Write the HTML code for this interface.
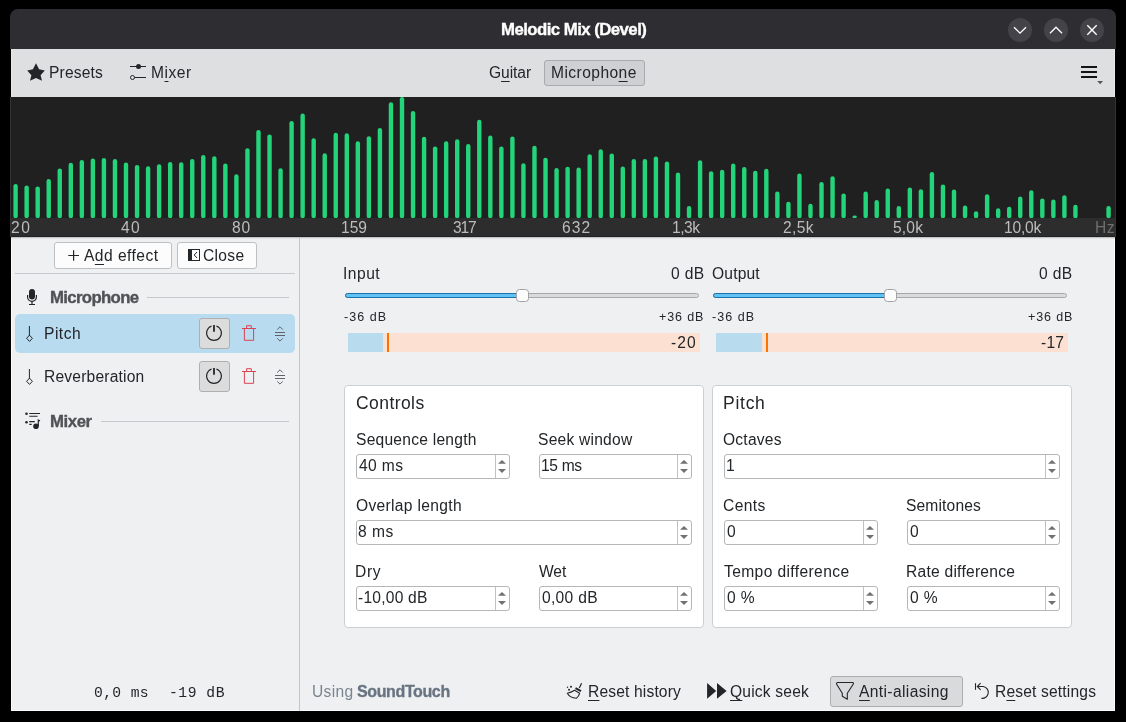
<!DOCTYPE html><html><head><meta charset="utf-8"><style>
html,body{margin:0;padding:0;width:1126px;height:722px;overflow:hidden;background:#000;font-family:"Liberation Sans",sans-serif;}
.t{position:absolute;white-space:pre;line-height:1;will-change:transform;}
.t u{text-decoration:underline;text-underline-offset:3px;text-decoration-thickness:1px;}
svg{overflow:visible}
</style></head><body>
<div style="position:absolute;left:11px;top:40px;width:1104px;height:671px;box-sizing:border-box;background:#eff0f1;border:1px solid #fbfbfc;border-top:none"></div>
<div style="position:absolute;left:10px;top:9px;width:1106px;height:40px;box-sizing:border-box;background:#2e2d32;border-radius:8px 8px 0 0"></div>
<div style="position:absolute;left:11px;top:49px;width:1104px;height:48px;box-sizing:border-box;background:#dedfe1;border-left:1px solid #e6e7e9;border-right:1px solid #e6e7e9"></div>
<div style="position:absolute;left:10px;top:97px;width:1106px;height:140px;box-sizing:border-box;background:#333336"></div>
<div style="position:absolute;left:11px;top:97px;width:1104px;height:121px;box-sizing:border-box;background:#202020"></div>
<div style="position:absolute;left:11px;top:218px;width:1104px;height:18px;box-sizing:border-box;background:#2d2d2d"></div>
<div style="position:absolute;left:11px;top:236px;width:1104px;height:1px;box-sizing:border-box;background:#222223"></div>
<div style="position:absolute;left:11px;top:237px;width:1104px;height:1px;box-sizing:border-box;background:#c4c5c7"></div>
<div style="position:absolute;left:11px;top:238px;width:1104px;height:1px;box-sizing:border-box;background:#e4e5e7"></div>
<svg width="1126" height="722" style="position:absolute;left:0;top:0"><defs><clipPath id="sc"><rect x="10" y="97" width="1105" height="121"/></clipPath></defs><g fill="#24d47b" clip-path="url(#sc)"><rect x="13.40" y="184.00" width="4.4" height="34.20" rx="2.2"/><rect x="24.44" y="185.40" width="4.4" height="32.80" rx="2.2"/><rect x="35.48" y="186.40" width="4.4" height="31.80" rx="2.2"/><rect x="46.52" y="179.00" width="4.4" height="39.20" rx="2.2"/><rect x="57.56" y="168.50" width="4.4" height="49.70" rx="2.2"/><rect x="68.60" y="162.70" width="4.4" height="55.50" rx="2.2"/><rect x="79.64" y="159.90" width="4.4" height="58.30" rx="2.2"/><rect x="90.68" y="158.50" width="4.4" height="59.70" rx="2.2"/><rect x="101.72" y="157.90" width="4.4" height="60.30" rx="2.2"/><rect x="112.76" y="159.00" width="4.4" height="59.20" rx="2.2"/><rect x="123.80" y="162.50" width="4.4" height="55.70" rx="2.2"/><rect x="134.84" y="164.90" width="4.4" height="53.30" rx="2.2"/><rect x="145.88" y="166.20" width="4.4" height="52.00" rx="2.2"/><rect x="156.92" y="164.30" width="4.4" height="53.90" rx="2.2"/><rect x="167.96" y="162.10" width="4.4" height="56.10" rx="2.2"/><rect x="179.00" y="162.30" width="4.4" height="55.90" rx="2.2"/><rect x="190.04" y="158.90" width="4.4" height="59.30" rx="2.2"/><rect x="201.08" y="155.00" width="4.4" height="63.20" rx="2.2"/><rect x="212.12" y="156.20" width="4.4" height="62.00" rx="2.2"/><rect x="223.16" y="163.50" width="4.4" height="54.70" rx="2.2"/><rect x="234.20" y="174.30" width="4.4" height="43.90" rx="2.2"/><rect x="245.24" y="148.20" width="4.4" height="70.00" rx="2.2"/><rect x="256.28" y="129.90" width="4.4" height="88.30" rx="2.2"/><rect x="267.32" y="134.40" width="4.4" height="83.80" rx="2.2"/><rect x="278.36" y="168.30" width="4.4" height="49.90" rx="2.2"/><rect x="289.40" y="121.10" width="4.4" height="97.10" rx="2.2"/><rect x="300.44" y="113.50" width="4.4" height="104.70" rx="2.2"/><rect x="311.48" y="138.20" width="4.4" height="80.00" rx="2.2"/><rect x="322.52" y="153.20" width="4.4" height="65.00" rx="2.2"/><rect x="333.56" y="132.75" width="4.4" height="85.45" rx="2.2"/><rect x="344.60" y="133.20" width="4.4" height="85.00" rx="2.2"/><rect x="355.64" y="141.20" width="4.4" height="77.00" rx="2.2"/><rect x="366.68" y="136.20" width="4.4" height="82.00" rx="2.2"/><rect x="377.72" y="127.90" width="4.4" height="90.30" rx="2.2"/><rect x="388.76" y="102.20" width="4.4" height="116.00" rx="2.2"/><rect x="399.80" y="97.00" width="4.4" height="121.20" rx="2.2"/><rect x="410.84" y="110.90" width="4.4" height="107.30" rx="2.2"/><rect x="421.88" y="136.80" width="4.4" height="81.40" rx="2.2"/><rect x="432.92" y="146.40" width="4.4" height="71.80" rx="2.2"/><rect x="443.96" y="141.20" width="4.4" height="77.00" rx="2.2"/><rect x="455.00" y="139.20" width="4.4" height="79.00" rx="2.2"/><rect x="466.04" y="144.00" width="4.4" height="74.20" rx="2.2"/><rect x="477.08" y="119.70" width="4.4" height="98.50" rx="2.2"/><rect x="488.12" y="135.60" width="4.4" height="82.60" rx="2.2"/><rect x="499.16" y="146.40" width="4.4" height="71.80" rx="2.2"/><rect x="510.20" y="136.60" width="4.4" height="81.60" rx="2.2"/><rect x="521.24" y="163.30" width="4.4" height="54.90" rx="2.2"/><rect x="532.28" y="145.80" width="4.4" height="72.40" rx="2.2"/><rect x="543.32" y="157.65" width="4.4" height="60.55" rx="2.2"/><rect x="554.36" y="168.10" width="4.4" height="50.10" rx="2.2"/><rect x="565.40" y="166.70" width="4.4" height="51.50" rx="2.2"/><rect x="576.44" y="167.50" width="4.4" height="50.70" rx="2.2"/><rect x="587.48" y="154.20" width="4.4" height="64.00" rx="2.2"/><rect x="598.52" y="149.20" width="4.4" height="69.00" rx="2.2"/><rect x="609.56" y="153.40" width="4.4" height="64.80" rx="2.2"/><rect x="620.60" y="166.50" width="4.4" height="51.70" rx="2.2"/><rect x="631.64" y="159.10" width="4.4" height="59.10" rx="2.2"/><rect x="642.68" y="159.10" width="4.4" height="59.10" rx="2.2"/><rect x="653.72" y="156.40" width="4.4" height="61.80" rx="2.2"/><rect x="664.76" y="161.50" width="4.4" height="56.70" rx="2.2"/><rect x="675.80" y="172.50" width="4.4" height="45.70" rx="2.2"/><rect x="686.84" y="206.00" width="4.4" height="12.20" rx="2.2"/><rect x="697.88" y="160.30" width="4.4" height="57.90" rx="2.2"/><rect x="708.92" y="171.30" width="4.4" height="46.90" rx="2.2"/><rect x="719.96" y="169.70" width="4.4" height="48.50" rx="2.2"/><rect x="731.00" y="163.50" width="4.4" height="54.70" rx="2.2"/><rect x="742.04" y="167.10" width="4.4" height="51.10" rx="2.2"/><rect x="753.08" y="170.70" width="4.4" height="47.50" rx="2.2"/><rect x="764.12" y="168.70" width="4.4" height="49.50" rx="2.2"/><rect x="775.16" y="191.60" width="4.4" height="26.60" rx="2.2"/><rect x="786.20" y="201.80" width="4.4" height="16.40" rx="2.2"/><rect x="797.24" y="173.50" width="4.4" height="44.70" rx="2.2"/><rect x="808.28" y="203.80" width="4.4" height="14.40" rx="2.2"/><rect x="819.32" y="182.10" width="4.4" height="36.10" rx="2.2"/><rect x="830.36" y="176.30" width="4.4" height="41.90" rx="2.2"/><rect x="841.40" y="193.40" width="4.4" height="24.80" rx="2.2"/><rect x="852.44" y="215.50" width="4.4" height="2.70" rx="2.2"/><rect x="863.48" y="191.60" width="4.4" height="26.60" rx="2.2"/><rect x="874.52" y="200.00" width="4.4" height="18.20" rx="2.2"/><rect x="885.56" y="188.60" width="4.4" height="29.60" rx="2.2"/><rect x="896.60" y="206.00" width="4.4" height="12.20" rx="2.2"/><rect x="907.64" y="187.40" width="4.4" height="30.80" rx="2.2"/><rect x="918.68" y="189.20" width="4.4" height="29.00" rx="2.2"/><rect x="929.72" y="172.10" width="4.4" height="46.10" rx="2.2"/><rect x="940.76" y="184.40" width="4.4" height="33.80" rx="2.2"/><rect x="951.80" y="189.40" width="4.4" height="28.80" rx="2.2"/><rect x="962.84" y="205.60" width="4.4" height="12.60" rx="2.2"/><rect x="973.88" y="211.30" width="4.4" height="6.90" rx="2.2"/><rect x="984.92" y="194.20" width="4.4" height="24.00" rx="2.2"/><rect x="995.96" y="208.30" width="4.4" height="9.90" rx="2.2"/><rect x="1007.00" y="206.80" width="4.4" height="11.40" rx="2.2"/><rect x="1018.04" y="196.60" width="4.4" height="21.60" rx="2.2"/><rect x="1029.08" y="190.20" width="4.4" height="28.00" rx="2.2"/><rect x="1040.12" y="198.40" width="4.4" height="19.80" rx="2.2"/><rect x="1051.16" y="199.60" width="4.4" height="18.60" rx="2.2"/><rect x="1062.20" y="195.20" width="4.4" height="23.00" rx="2.2"/><rect x="1073.24" y="204.80" width="4.4" height="13.40" rx="2.2"/><rect x="1106.36" y="206.00" width="4.4" height="12.20" rx="2.2"/></g></svg>
<svg width="1126" height="60" style="position:absolute;left:0;top:0"><circle cx="1020" cy="30" r="12" fill="#444349"/><circle cx="1056" cy="30" r="12" fill="#444349"/><circle cx="1092" cy="30" r="12" fill="#444349"/><path d="M1014,27.2 L1020,33.2 L1026,27.2" fill="none" stroke="#fff" stroke-width="1.3"/><path d="M1050,33.2 L1056,27.2 L1062,33.2" fill="none" stroke="#fff" stroke-width="1.3"/><path d="M1087.3,25.3 L1096.7,34.7 M1096.7,25.3 L1087.3,34.7" fill="none" stroke="#fff" stroke-width="1.4"/></svg>
<svg width="1126" height="100" style="position:absolute;left:0;top:0"><path d="M36,63.3 L39.1,69.2 L44.8,70.4 L40.6,75.2 L42,80.8 L36,78.1 L30,80.8 L31.4,75.2 L27.2,70.4 L32.9,69.2 Z" fill="#232629"/><path d="M130,66.5 H146 M134.5,77.5 H146" stroke="#232629" stroke-width="1"/><circle cx="138.5" cy="66.5" r="2.5" fill="#232629"/><circle cx="132.5" cy="77.5" r="2" fill="none" stroke="#232629" stroke-width="1"/><path d="M1081,67 H1097 M1081,72 H1097 M1081,77 H1097" stroke="#121416" stroke-width="2"/><path d="M1097.2,81.1 L1103.1,81.1 L1100.15,84.2 Z" fill="#55585b"/></svg>
<div style="position:absolute;left:544px;top:60px;width:101px;height:26px;box-sizing:border-box;background:#cfd0d2;border:1px solid #a9aaad;border-radius:3px"></div>
<div style="position:absolute;left:299px;top:237px;width:1px;height:474px;box-sizing:border-box;background:#c3c6c9"></div>
<div style="position:absolute;left:54px;top:242px;width:118px;height:27px;box-sizing:border-box;background:#fcfcfc;border:1px solid #bfc0c2;border-radius:3px"></div>
<div style="position:absolute;left:177px;top:242px;width:80px;height:27px;box-sizing:border-box;background:#fcfcfc;border:1px solid #bfc0c2;border-radius:3px"></div>
<div style="position:absolute;left:15px;top:273px;width:280px;height:1px;box-sizing:border-box;background:#c6c9cc"></div>
<div style="position:absolute;left:147px;top:297px;width:142px;height:1px;box-sizing:border-box;background:#c6c9cc"></div>
<div style="position:absolute;left:101px;top:421px;width:188px;height:1px;box-sizing:border-box;background:#c6c9cc"></div>
<div style="position:absolute;left:15px;top:314px;width:280px;height:39px;box-sizing:border-box;background:#b8dbef;border-radius:5px"></div>
<div style="position:absolute;left:199px;top:318px;width:31px;height:31px;box-sizing:border-box;background:#dcdcdd;border:1px solid #aeafb1;border-radius:3px"></div>
<div style="position:absolute;left:199px;top:361px;width:31px;height:31px;box-sizing:border-box;background:#dcdcdd;border:1px solid #aeafb1;border-radius:3px"></div>
<svg width="300" height="440" style="position:absolute;left:0;top:0"><path d="M68.3,255.5 H79 M73.6,250.2 V260.8" stroke="#232629" stroke-width="1.2"/><rect x="188.5" y="249.5" width="11" height="11" fill="none" stroke="#232629" stroke-width="1"/><rect x="188" y="249" width="4" height="12" fill="#232629"/><path d="M197,252 L194.2,255 L197,258" fill="none" stroke="#232629" stroke-width="1"/><rect x="29" y="289" width="6" height="10.6" rx="3" fill="#232629"/><path d="M27.6,295 V297 A4.4,4.4 0 0 0 36.4,297 V295" fill="none" stroke="#232629" stroke-width="1.2"/><path d="M32,301.3 V304.2 M29,304.5 H35" stroke="#232629" stroke-width="1.2"/><path d="M29.4,326 V336" stroke="#232629" stroke-width="1"/><path d="M29.5,335.2 L32.4,338.3 L29.5,341.4 L26.6,338.3 Z" fill="none" stroke="#232629" stroke-width="1"/><path d="M29.4,369 V379" stroke="#232629" stroke-width="1"/><path d="M29.5,378.2 L32.4,381.3 L29.5,384.4 L26.6,381.3 Z" fill="none" stroke="#232629" stroke-width="1"/><path d="M211.6,326 A7.4,7.4 0 1 0 216.4,326" fill="none" stroke="#232629" stroke-width="1.1"/><path d="M214,325 V331.8" stroke="#232629" stroke-width="1.8"/><path d="M242,328.5 H256 M246.6,328.5 V325.7 H251.3 V328.5 M244.4,328.5 V340.3 H253.6 V328.5" fill="none" stroke="#da4453" stroke-width="1"/><path d="M275,332.5 H285 M275,335.5 H285" stroke="#5f6368" stroke-width="1"/><path d="M277.2,329.6 L280,326.8 L282.8,329.6 M277.2,338.3 L280,341.1 L282.8,338.3" fill="none" stroke="#5f6368" stroke-width="1"/><path d="M211.6,369 A7.4,7.4 0 1 0 216.4,369" fill="none" stroke="#232629" stroke-width="1.1"/><path d="M214,368 V374.8" stroke="#232629" stroke-width="1.8"/><path d="M242,371.5 H256 M246.6,371.5 V368.7 H251.3 V371.5 M244.4,371.5 V383.3 H253.6 V371.5" fill="none" stroke="#da4453" stroke-width="1"/><path d="M275,375.5 H285 M275,378.5 H285" stroke="#5f6368" stroke-width="1"/><path d="M277.2,372.6 L280,369.8 L282.8,372.6 M277.2,381.3 L280,384.1 L282.8,381.3" fill="none" stroke="#5f6368" stroke-width="1"/><circle cx="26.5" cy="413.7" r="1.3" fill="#232629"/><circle cx="26.5" cy="422.2" r="1.3" fill="#232629"/><path d="M29.3,413.5 H40 M29.3,416.3 H37.6 M29.3,421.6 H34.8 M29.3,424.4 H31.7" stroke="#232629" stroke-width="1.1"/><circle cx="36" cy="426.3" r="2.8" fill="#232629"/><path d="M38.3,426 V420 L40,421" fill="none" stroke="#232629" stroke-width="1.2"/></svg>
<div style="position:absolute;left:345px;top:293px;width:354px;height:5px;box-sizing:border-box;background:#dadcdb;border:1px solid #a6a7a8;border-radius:2.5px"></div>
<div style="position:absolute;left:345px;top:293px;width:177.60000000000002px;height:5px;box-sizing:border-box;background:#62c2f6;border:1px solid #1f72a8;border-radius:2.5px"></div>
<div style="position:absolute;left:516px;top:289px;width:13px;height:13px;box-sizing:border-box;background:#fcfcfc;border:1px solid #a2a3a5;border-radius:3.5px"></div>
<div style="position:absolute;left:348px;top:333px;width:352px;height:19px;box-sizing:border-box;background:#fce1d2"></div>
<div style="position:absolute;left:348px;top:333px;width:35px;height:19px;box-sizing:border-box;background:#b8dbee"></div>
<div style="position:absolute;left:387.2px;top:333px;width:2.0px;height:19px;box-sizing:border-box;background:#f67400"></div>
<div style="position:absolute;left:713px;top:293px;width:354px;height:5px;box-sizing:border-box;background:#dadcdb;border:1px solid #a6a7a8;border-radius:2.5px"></div>
<div style="position:absolute;left:713px;top:293px;width:177.20000000000005px;height:5px;box-sizing:border-box;background:#62c2f6;border:1px solid #1f72a8;border-radius:2.5px"></div>
<div style="position:absolute;left:884px;top:289px;width:13px;height:13px;box-sizing:border-box;background:#fcfcfc;border:1px solid #a2a3a5;border-radius:3.5px"></div>
<div style="position:absolute;left:715.6px;top:333px;width:351.9999999999999px;height:19px;box-sizing:border-box;background:#fce1d2"></div>
<div style="position:absolute;left:715.6px;top:333px;width:46.69999999999993px;height:19px;box-sizing:border-box;background:#b8dbee"></div>
<div style="position:absolute;left:765.8px;top:333px;width:2.0px;height:19px;box-sizing:border-box;background:#f67400"></div>
<div style="position:absolute;left:344px;top:385px;width:360px;height:243px;box-sizing:border-box;background:#fff;border:1px solid #cdd0d3;border-radius:4px"></div>
<div style="position:absolute;left:712px;top:385px;width:360px;height:243px;box-sizing:border-box;background:#fff;border:1px solid #cdd0d3;border-radius:4px"></div>
<div style="position:absolute;left:356px;top:586px;width:154px;height:25px;box-sizing:border-box;background:#fff;border:1px solid #b4b6b8;border-radius:3px"></div><div style="position:absolute;left:495px;top:587px;width:1px;height:23px;box-sizing:border-box;background:#bfc1c3"></div><svg width="16" height="25" style="position:absolute;left:494px;top:586px" viewBox="494 586 16 25"><path d="M498,595.8 L502,591.9 L506,595.8 Z M498,601.1 L502,605.0 L506,601.1 Z" fill="#6f7173"/></svg>
<div style="position:absolute;left:539px;top:586px;width:153px;height:25px;box-sizing:border-box;background:#fff;border:1px solid #b4b6b8;border-radius:3px"></div><div style="position:absolute;left:677px;top:587px;width:1px;height:23px;box-sizing:border-box;background:#bfc1c3"></div><svg width="16" height="25" style="position:absolute;left:676px;top:586px" viewBox="676 586 16 25"><path d="M680,595.8 L684,591.9 L688,595.8 Z M680,601.1 L684,605.0 L688,601.1 Z" fill="#6f7173"/></svg>
<div style="position:absolute;left:724px;top:586px;width:154px;height:25px;box-sizing:border-box;background:#fff;border:1px solid #b4b6b8;border-radius:3px"></div><div style="position:absolute;left:863px;top:587px;width:1px;height:23px;box-sizing:border-box;background:#bfc1c3"></div><svg width="16" height="25" style="position:absolute;left:862px;top:586px" viewBox="862 586 16 25"><path d="M866,595.8 L870,591.9 L874,595.8 Z M866,601.1 L870,605.0 L874,601.1 Z" fill="#6f7173"/></svg>
<div style="position:absolute;left:907px;top:586px;width:153px;height:25px;box-sizing:border-box;background:#fff;border:1px solid #b4b6b8;border-radius:3px"></div><div style="position:absolute;left:1045px;top:587px;width:1px;height:23px;box-sizing:border-box;background:#bfc1c3"></div><svg width="16" height="25" style="position:absolute;left:1044px;top:586px" viewBox="1044 586 16 25"><path d="M1048,595.8 L1052,591.9 L1056,595.8 Z M1048,601.1 L1052,605.0 L1056,601.1 Z" fill="#6f7173"/></svg>
<div style="position:absolute;left:356px;top:454px;width:154px;height:25px;box-sizing:border-box;background:#fff;border:1px solid #b4b6b8;border-radius:3px"></div><div style="position:absolute;left:495px;top:455px;width:1px;height:23px;box-sizing:border-box;background:#bfc1c3"></div><svg width="16" height="25" style="position:absolute;left:494px;top:454px" viewBox="494 454 16 25"><path d="M498,463.8 L502,459.9 L506,463.8 Z M498,469.1 L502,473.0 L506,469.1 Z" fill="#6f7173"/></svg>
<div style="position:absolute;left:539px;top:454px;width:153px;height:25px;box-sizing:border-box;background:#fff;border:1px solid #b4b6b8;border-radius:3px"></div><div style="position:absolute;left:677px;top:455px;width:1px;height:23px;box-sizing:border-box;background:#bfc1c3"></div><svg width="16" height="25" style="position:absolute;left:676px;top:454px" viewBox="676 454 16 25"><path d="M680,463.8 L684,459.9 L688,463.8 Z M680,469.1 L684,473.0 L688,469.1 Z" fill="#6f7173"/></svg>
<div style="position:absolute;left:356px;top:520px;width:336px;height:25px;box-sizing:border-box;background:#fff;border:1px solid #b4b6b8;border-radius:3px"></div><div style="position:absolute;left:677px;top:521px;width:1px;height:23px;box-sizing:border-box;background:#bfc1c3"></div><svg width="16" height="25" style="position:absolute;left:676px;top:520px" viewBox="676 520 16 25"><path d="M680,529.8 L684,525.9 L688,529.8 Z M680,535.1 L684,539.0 L688,535.1 Z" fill="#6f7173"/></svg>
<div style="position:absolute;left:724px;top:454px;width:336px;height:25px;box-sizing:border-box;background:#fff;border:1px solid #b4b6b8;border-radius:3px"></div><div style="position:absolute;left:1045px;top:455px;width:1px;height:23px;box-sizing:border-box;background:#bfc1c3"></div><svg width="16" height="25" style="position:absolute;left:1044px;top:454px" viewBox="1044 454 16 25"><path d="M1048,463.8 L1052,459.9 L1056,463.8 Z M1048,469.1 L1052,473.0 L1056,469.1 Z" fill="#6f7173"/></svg>
<div style="position:absolute;left:724px;top:520px;width:154px;height:25px;box-sizing:border-box;background:#fff;border:1px solid #b4b6b8;border-radius:3px"></div><div style="position:absolute;left:863px;top:521px;width:1px;height:23px;box-sizing:border-box;background:#bfc1c3"></div><svg width="16" height="25" style="position:absolute;left:862px;top:520px" viewBox="862 520 16 25"><path d="M866,529.8 L870,525.9 L874,529.8 Z M866,535.1 L870,539.0 L874,535.1 Z" fill="#6f7173"/></svg>
<div style="position:absolute;left:907px;top:520px;width:153px;height:25px;box-sizing:border-box;background:#fff;border:1px solid #b4b6b8;border-radius:3px"></div><div style="position:absolute;left:1045px;top:521px;width:1px;height:23px;box-sizing:border-box;background:#bfc1c3"></div><svg width="16" height="25" style="position:absolute;left:1044px;top:520px" viewBox="1044 520 16 25"><path d="M1048,529.8 L1052,525.9 L1056,529.8 Z M1048,535.1 L1052,539.0 L1056,535.1 Z" fill="#6f7173"/></svg>
<div style="position:absolute;left:830px;top:676px;width:133px;height:31px;box-sizing:border-box;background:#d9dadc;border:1px solid #acadaf;border-radius:3px"></div>
<svg width="1126" height="722" style="position:absolute;left:0;top:0"><path d="M581.6,683.3 L579.3,688" stroke="#232629" stroke-width="1.2"/><path d="M575.5,688.1 L581,691.1" stroke="#232629" stroke-width="2"/><path d="M574.6,690.3 L579.6,693.3 Q579,696 576.3,698.3 Q570,698 567.3,693.3 Q571,692.6 574.6,690.3 Z" fill="none" stroke="#232629" stroke-width="1.1" stroke-linejoin="round"/><circle cx="567.5" cy="687.3" r="0.7" fill="#232629"/><circle cx="571" cy="686.8" r="1" fill="#232629"/><circle cx="569" cy="689.8" r="1" fill="#232629"/><path d="M707.1,683.1 L716.2,690.9 L707.1,698.7 Z M717,683.1 L726.6,690.9 L717,698.7 Z" fill="#232629"/><path d="M837.5,682.5 H852.8 Q854,683 853,684.5 L847.3,693.3 V699.3 L842.3,696.3 V693.3 L836.8,684.5 Q836,683 837.5,682.5 Z" fill="none" stroke="#232629" stroke-width="1.1" stroke-linejoin="round"/><path d="M975.5,683.2 V689.8" stroke="#232629" stroke-width="1.1"/><path d="M980.6,683.2 L977.3,686.5 L980.6,689.8 M977.3,686.5 H983.3 A5.9,5.9 0 0 1 981.3,698.3" fill="none" stroke="#232629" stroke-width="1.1"/></svg>
<div class="t" style="left:500.58px;top:22.00px;font-size:16.8px;font-weight:700;color:#ffffff;letter-spacing:-0.549px;font-family:'Liberation Sans', sans-serif;-webkit-text-stroke:0.35px currentColor">Melodic Mix (Devel)</div>
<div class="t" style="left:49.05px;top:65.00px;font-size:15.6px;font-weight:400;color:#232629;letter-spacing:0.171px;font-family:'Liberation Sans', sans-serif">Presets</div>
<div class="t" style="left:151.15px;top:65.00px;font-size:15.6px;font-weight:400;color:#232629;letter-spacing:0.503px;font-family:'Liberation Sans', sans-serif">M<u>i</u>xer</div>
<div class="t" style="left:488.73px;top:65.00px;font-size:15.6px;font-weight:400;color:#232629;letter-spacing:-0.065px;font-family:'Liberation Sans', sans-serif">G<u>u</u>itar</div>
<div class="t" style="left:551.25px;top:65.00px;font-size:15.6px;font-weight:400;color:#232629;letter-spacing:0.433px;font-family:'Liberation Sans', sans-serif">Micropho<u>n</u>e</div>
<div class="t" style="left:10.84px;top:220.00px;font-size:15.6px;font-weight:400;color:#bcbcbc;letter-spacing:1.469px;font-family:'Liberation Sans', sans-serif">20</div>
<div class="t" style="left:121.15px;top:220.00px;font-size:15.6px;font-weight:400;color:#bcbcbc;letter-spacing:1.212px;font-family:'Liberation Sans', sans-serif">40</div>
<div class="t" style="left:232.14px;top:220.00px;font-size:15.6px;font-weight:400;color:#bcbcbc;letter-spacing:0.918px;font-family:'Liberation Sans', sans-serif">80</div>
<div class="t" style="left:340.72px;top:220.00px;font-size:15.6px;font-weight:400;color:#bcbcbc;letter-spacing:-0.014px;font-family:'Liberation Sans', sans-serif">159</div>
<div class="t" style="left:452.69px;top:220.00px;font-size:15.6px;font-weight:400;color:#bcbcbc;letter-spacing:-1.203px;font-family:'Liberation Sans', sans-serif">317</div>
<div class="t" style="left:562.17px;top:220.00px;font-size:15.6px;font-weight:400;color:#bcbcbc;letter-spacing:1.047px;font-family:'Liberation Sans', sans-serif">632</div>
<div class="t" style="left:672.00px;top:220.00px;font-size:15.6px;font-weight:400;color:#bcbcbc;letter-spacing:-0.459px;font-family:'Liberation Sans', sans-serif">1,3k</div>
<div class="t" style="left:783.45px;top:220.00px;font-size:15.6px;font-weight:400;color:#bcbcbc;letter-spacing:0.373px;font-family:'Liberation Sans', sans-serif">2,5k</div>
<div class="t" style="left:893.27px;top:220.00px;font-size:15.6px;font-weight:400;color:#bcbcbc;letter-spacing:0.158px;font-family:'Liberation Sans', sans-serif">5,0k</div>
<div class="t" style="left:1004.12px;top:220.00px;font-size:15.6px;font-weight:400;color:#bcbcbc;letter-spacing:-0.194px;font-family:'Liberation Sans', sans-serif">10,0k</div>
<div class="t" style="left:1095.45px;top:220.00px;font-size:15.6px;font-weight:400;color:#6f6f6f;letter-spacing:0.380px;font-family:'Liberation Sans', sans-serif">Hz</div>
<div class="t" style="left:84.11px;top:248.00px;font-size:15.6px;font-weight:400;color:#232629;letter-spacing:0.456px;font-family:'Liberation Sans', sans-serif">A<u>d</u>d effect</div>
<div class="t" style="left:203.22px;top:248.00px;font-size:15.6px;font-weight:400;color:#232629;letter-spacing:0.315px;font-family:'Liberation Sans', sans-serif">Close</div>
<div class="t" style="left:50.38px;top:290.00px;font-size:16.8px;font-weight:700;color:#505255;letter-spacing:-0.669px;font-family:'Liberation Sans', sans-serif;-webkit-text-stroke:0.35px currentColor">Microphone</div>
<div class="t" style="left:44.15px;top:326.00px;font-size:15.6px;font-weight:400;color:#232629;letter-spacing:0.482px;font-family:'Liberation Sans', sans-serif">Pitch</div>
<div class="t" style="left:44.15px;top:369.00px;font-size:15.6px;font-weight:400;color:#232629;letter-spacing:0.192px;font-family:'Liberation Sans', sans-serif">Reverberation</div>
<div class="t" style="left:50.38px;top:414.00px;font-size:16.8px;font-weight:700;color:#505255;letter-spacing:-0.423px;font-family:'Liberation Sans', sans-serif;-webkit-text-stroke:0.35px currentColor">Mixer</div>
<div class="t" style="left:343.02px;top:266.00px;font-size:15.6px;font-weight:400;color:#232629;letter-spacing:0.501px;font-family:'Liberation Sans', sans-serif">Input</div>
<div class="t" style="left:670.61px;top:266.00px;font-size:15.6px;font-weight:400;color:#232629;letter-spacing:0.356px;font-family:'Liberation Sans', sans-serif">0 dB</div>
<div class="t" style="left:343.87px;top:311.00px;font-size:12.5px;font-weight:400;color:#232629;letter-spacing:1.057px;font-family:'Liberation Sans', sans-serif">-36 dB</div>
<div class="t" style="left:659.34px;top:311.00px;font-size:12.5px;font-weight:400;color:#232629;letter-spacing:0.878px;font-family:'Liberation Sans', sans-serif">+36 dB</div>
<div class="t" style="left:712.05px;top:266.00px;font-size:15.6px;font-weight:400;color:#232629;letter-spacing:0.172px;font-family:'Liberation Sans', sans-serif">Output</div>
<div class="t" style="left:1038.91px;top:266.00px;font-size:15.6px;font-weight:400;color:#232629;letter-spacing:0.356px;font-family:'Liberation Sans', sans-serif">0 dB</div>
<div class="t" style="left:712.17px;top:311.00px;font-size:12.5px;font-weight:400;color:#232629;letter-spacing:1.057px;font-family:'Liberation Sans', sans-serif">-36 dB</div>
<div class="t" style="left:1027.64px;top:311.00px;font-size:12.5px;font-weight:400;color:#232629;letter-spacing:0.878px;font-family:'Liberation Sans', sans-serif">+36 dB</div>
<div class="t" style="left:671.31px;top:335.00px;font-size:15.6px;font-weight:400;color:#232629;letter-spacing:1.099px;font-family:'Liberation Sans', sans-serif">-20</div>
<div class="t" style="left:1041.43px;top:335.00px;font-size:15.6px;font-weight:400;color:#232629;letter-spacing:0.248px;font-family:'Liberation Sans', sans-serif">-17</div>
<div class="t" style="left:355.61px;top:395.00px;font-size:17.5px;font-weight:400;color:#232629;letter-spacing:0.432px;font-family:'Liberation Sans', sans-serif">Controls</div>
<div class="t" style="left:722.63px;top:395.00px;font-size:17.5px;font-weight:400;color:#232629;letter-spacing:0.736px;font-family:'Liberation Sans', sans-serif">Pitch</div>
<div class="t" style="left:355.69px;top:432.00px;font-size:15.6px;font-weight:400;color:#232629;letter-spacing:0.237px;font-family:'Liberation Sans', sans-serif">Sequence length</div>
<div class="t" style="left:538.39px;top:432.00px;font-size:15.6px;font-weight:400;color:#232629;letter-spacing:0.230px;font-family:'Liberation Sans', sans-serif">Seek window</div>
<div class="t" style="left:355.55px;top:498.00px;font-size:15.6px;font-weight:400;color:#232629;letter-spacing:0.321px;font-family:'Liberation Sans', sans-serif">Overlap length</div>
<div class="t" style="left:354.95px;top:564.00px;font-size:15.6px;font-weight:400;color:#232629;letter-spacing:0.659px;font-family:'Liberation Sans', sans-serif">Dry</div>
<div class="t" style="left:539.21px;top:564.00px;font-size:15.6px;font-weight:400;color:#232629;letter-spacing:-0.096px;font-family:'Liberation Sans', sans-serif">Wet</div>
<div class="t" style="left:359.39px;top:458.00px;font-size:15.6px;font-weight:400;color:#232629;letter-spacing:0.386px;font-family:'Liberation Sans', sans-serif">40 ms</div>
<div class="t" style="left:541.13px;top:458.00px;font-size:15.6px;font-weight:400;color:#232629;letter-spacing:-0.324px;font-family:'Liberation Sans', sans-serif">15 ms</div>
<div class="t" style="left:358.19px;top:524.00px;font-size:15.6px;font-weight:400;color:#232629;letter-spacing:0.497px;font-family:'Liberation Sans', sans-serif">8 ms</div>
<div class="t" style="left:358.21px;top:590.00px;font-size:15.6px;font-weight:400;color:#232629;letter-spacing:0.224px;font-family:'Liberation Sans', sans-serif">-10,00 dB</div>
<div class="t" style="left:541.74px;top:590.00px;font-size:15.6px;font-weight:400;color:#232629;letter-spacing:0.309px;font-family:'Liberation Sans', sans-serif">0,00 dB</div>
<div class="t" style="left:723.35px;top:432.00px;font-size:15.6px;font-weight:400;color:#232629;letter-spacing:0.219px;font-family:'Liberation Sans', sans-serif">Octaves</div>
<div class="t" style="left:723.02px;top:498.00px;font-size:15.6px;font-weight:400;color:#232629;letter-spacing:0.365px;font-family:'Liberation Sans', sans-serif">Cents</div>
<div class="t" style="left:906.19px;top:498.00px;font-size:15.6px;font-weight:400;color:#232629;letter-spacing:0.149px;font-family:'Liberation Sans', sans-serif">Semitones</div>
<div class="t" style="left:723.71px;top:564.00px;font-size:15.6px;font-weight:400;color:#232629;letter-spacing:0.383px;font-family:'Liberation Sans', sans-serif">Tempo difference</div>
<div class="t" style="left:905.95px;top:564.00px;font-size:15.6px;font-weight:400;color:#232629;letter-spacing:0.243px;font-family:'Liberation Sans', sans-serif">Rate difference</div>
<div class="t" style="left:726.23px;top:458.00px;font-size:15.6px;font-weight:400;color:#232629;letter-spacing:0.000px;font-family:'Liberation Sans', sans-serif">1</div>
<div class="t" style="left:726.74px;top:524.00px;font-size:15.6px;font-weight:400;color:#232629;letter-spacing:0.000px;font-family:'Liberation Sans', sans-serif">0</div>
<div class="t" style="left:909.74px;top:524.00px;font-size:15.6px;font-weight:400;color:#232629;letter-spacing:0.000px;font-family:'Liberation Sans', sans-serif">0</div>
<div class="t" style="left:726.74px;top:590.00px;font-size:15.6px;font-weight:400;color:#232629;letter-spacing:0.337px;font-family:'Liberation Sans', sans-serif">0 %</div>
<div class="t" style="left:909.74px;top:590.00px;font-size:15.6px;font-weight:400;color:#232629;letter-spacing:0.337px;font-family:'Liberation Sans', sans-serif">0 %</div>
<div class="t" style="left:94.05px;top:686.00px;font-size:14.67px;font-weight:400;color:#232629;letter-spacing:0.369px;font-family:'Liberation Mono', monospace">0,0 ms</div>
<div class="t" style="left:169.36px;top:686.00px;font-size:14.67px;font-weight:400;color:#232629;letter-spacing:0.544px;font-family:'Liberation Mono', monospace">-19 dB</div>
<div class="t" style="left:311.71px;top:684.00px;font-size:15.6px;font-weight:400;color:#7a8591;letter-spacing:0.332px;font-family:'Liberation Sans', sans-serif">Using</div>
<div class="t" style="left:356.69px;top:684.00px;font-size:16px;font-weight:700;color:#687482;letter-spacing:-0.378px;font-family:'Liberation Sans', sans-serif;-webkit-text-stroke:0.35px currentColor">SoundTouch</div>
<div class="t" style="left:587.95px;top:684.00px;font-size:15.6px;font-weight:400;color:#232629;letter-spacing:0.152px;font-family:'Liberation Sans', sans-serif"><u>R</u>eset history</div>
<div class="t" style="left:730.25px;top:684.00px;font-size:15.6px;font-weight:400;color:#232629;letter-spacing:0.190px;font-family:'Liberation Sans', sans-serif"><u>Q</u>uick seek</div>
<div class="t" style="left:859.01px;top:684.00px;font-size:15.6px;font-weight:400;color:#232629;letter-spacing:0.369px;font-family:'Liberation Sans', sans-serif"><u>A</u>nti-aliasing</div>
<div class="t" style="left:994.95px;top:684.00px;font-size:15.6px;font-weight:400;color:#232629;letter-spacing:0.163px;font-family:'Liberation Sans', sans-serif">R<u>e</u>set settings</div>
</body></html>
